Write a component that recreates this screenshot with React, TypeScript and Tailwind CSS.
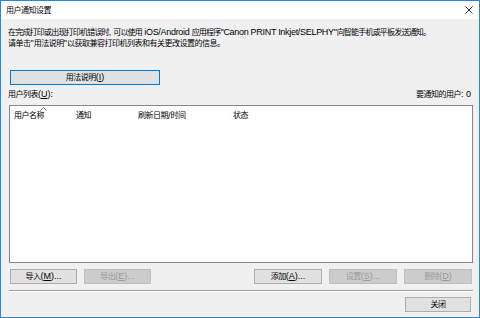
import React from 'react';

const font = '"Liberation Sans", "Noto Sans CJK SC", sans-serif';

// CJK runs render narrower than Latin in the original dialog font
function Mixed({ text, cjk = 'text-[8px] tracking-[-0.5px]' }: { text: string; cjk?: string }) {
  const parts = text.split(/([\u3000-\u303f\u4e00-\u9fff\uff00-\uffef]+)/);
  return (
    <>
      {parts.map((p, i) =>
        i % 2 === 1 ? (
          <span key={i} className={cjk}>
            {p}
          </span>
        ) : (
          <span key={i}>{p}</span>
        ),
      )}
    </>
  );
}

function WinButton({
  label,
  disabled,
  focused,
  className = '',
}: {
  label: React.ReactNode;
  disabled?: boolean;
  focused?: boolean;
  className?: string;
}) {
  const tone = disabled
    ? 'bg-[#cccccc] border-[#bfbfbf] text-[#9a9a9a]'
    : focused
      ? 'bg-[#e1e1e1] border-[#0078d7] text-black'
      : 'bg-[#e1e1e1] border-[#adadad] text-black';
  return (
    <div
      className={`h-[15px] flex items-center justify-center border text-[9px] leading-none ${tone} ${className}`}
    >
      {label}
    </div>
  );
}

function Accel({ before, accel, after = '' }: { before: string; accel: string; after?: string }) {
  return (
    <span>
      <Mixed text={before} />(<span className="underline">{accel}</span>){after}
    </span>
  );
}

export default function App() {
  const columns = [
    { label: '用户名称', w: 'w-[62px]', sorted: true },
    { label: '通知', w: 'w-[62px]' },
    { label: '刷新日期/时间', w: 'w-[95px]' },
    { label: '状态', w: 'w-[80px]' },
  ];

  return (
    <div
      className="w-[480px] h-[318px] border border-[#2b86d8] flex flex-col bg-[#f0f0f0] text-black"
      style={{ fontFamily: font }}
    >
      {/* Title bar */}
      <div className="h-[18px] bg-white flex items-center justify-between pl-[5px] pr-[6px]">
        <span className="text-[9px] leading-none">
          <Mixed text="用户通知设置" />
        </span>
        <svg width="8" height="8" viewBox="0 0 8 8" className="text-[#333]">
          <path d="M0.5 0.5 L7.5 7.5 M7.5 0.5 L0.5 7.5" stroke="currentColor" strokeWidth="1" />
        </svg>
      </div>

      {/* Body */}
      <div className="flex-1 flex flex-col px-[7px]">
        <div className="pt-[8px] text-[9px] leading-[10px] whitespace-nowrap">
          <p className="tracking-[-0.3px]">
            <Mixed
              text={'在完成打印或出现打印机错误时, 可以使用 iOS/Android 应用程序"Canon PRINT Inkjet/SELPHY"向智能手机或平板发送通知。'}
              cjk="text-[8px] tracking-[-0.8px]"
            />
          </p>
          <p>
            <Mixed text={'请单击"用法说明"以获取兼容打印机列表和有关更改设置的信息。'} />
          </p>
        </div>

        <WinButton
          label={<Accel before="用法说明" accel="I" />}
          focused
          className="mt-[21px] ml-[2px] w-[150px]"
        />

        <div className="mt-[4px] flex items-end justify-between text-[9px] leading-[10px]">
          <span>
            <Mixed text="用户列表" />(<span className="underline">U</span>):
          </span>
          <span className="pr-[1px]">
            <Mixed text="要通知的用户: 0" />
          </span>
        </div>

        {/* List view */}
        <div className="mt-[5px] ml-[1px] w-[464px] h-[158px] bg-white border border-[#828790]">
          <div className="flex h-[19px] items-center text-[9px] leading-none">
            {columns.map((c) => (
              <div key={c.label} className={`relative h-full flex items-center pl-[4px] pt-[1px] ${c.w}`}>
                {c.sorted && (
                  <svg
                    width="7"
                    height="4"
                    viewBox="0 0 7 4"
                    className="absolute top-[1px] left-[30px] text-[#777]"
                  >
                    <path d="M0.5 3.5 L3.5 0.5 L6.5 3.5" fill="none" stroke="currentColor" strokeWidth="1" />
                  </svg>
                )}
                <Mixed text={c.label} />
              </div>
            ))}
          </div>
        </div>

        {/* Row of action buttons */}
        <div className="mt-[6px] flex items-center ml-[2px] w-[462px]">
          <WinButton label={<Accel before="导入" accel="M" after="..." />} className="w-[67px]" />
          <WinButton
            label={<Accel before="导出" accel="E" after="..." />}
            disabled
            className="w-[67px] ml-[7px]"
          />
          <div className="flex-1" />
          <WinButton label={<Accel before="添加" accel="A" after="..." />} className="w-[68px]" />
          <WinButton
            label={<Accel before="设置" accel="S" after="..." />}
            disabled
            className="w-[68px] ml-[7px]"
          />
          <WinButton
            label={<Accel before="删除" accel="D" />}
            disabled
            className="w-[68px] ml-[7px]"
          />
        </div>

        {/* Separator */}
        <div className="mt-[6px] ml-[1px] w-[464px] h-[2px] border-t border-[#a0a0a0] border-b-white border-b" />

        <div className="mt-[5px] flex justify-end pr-[1px]">
          <WinButton label={<Mixed text="关闭" />} className="w-[66px]" />
        </div>
      </div>
    </div>
  );
}
